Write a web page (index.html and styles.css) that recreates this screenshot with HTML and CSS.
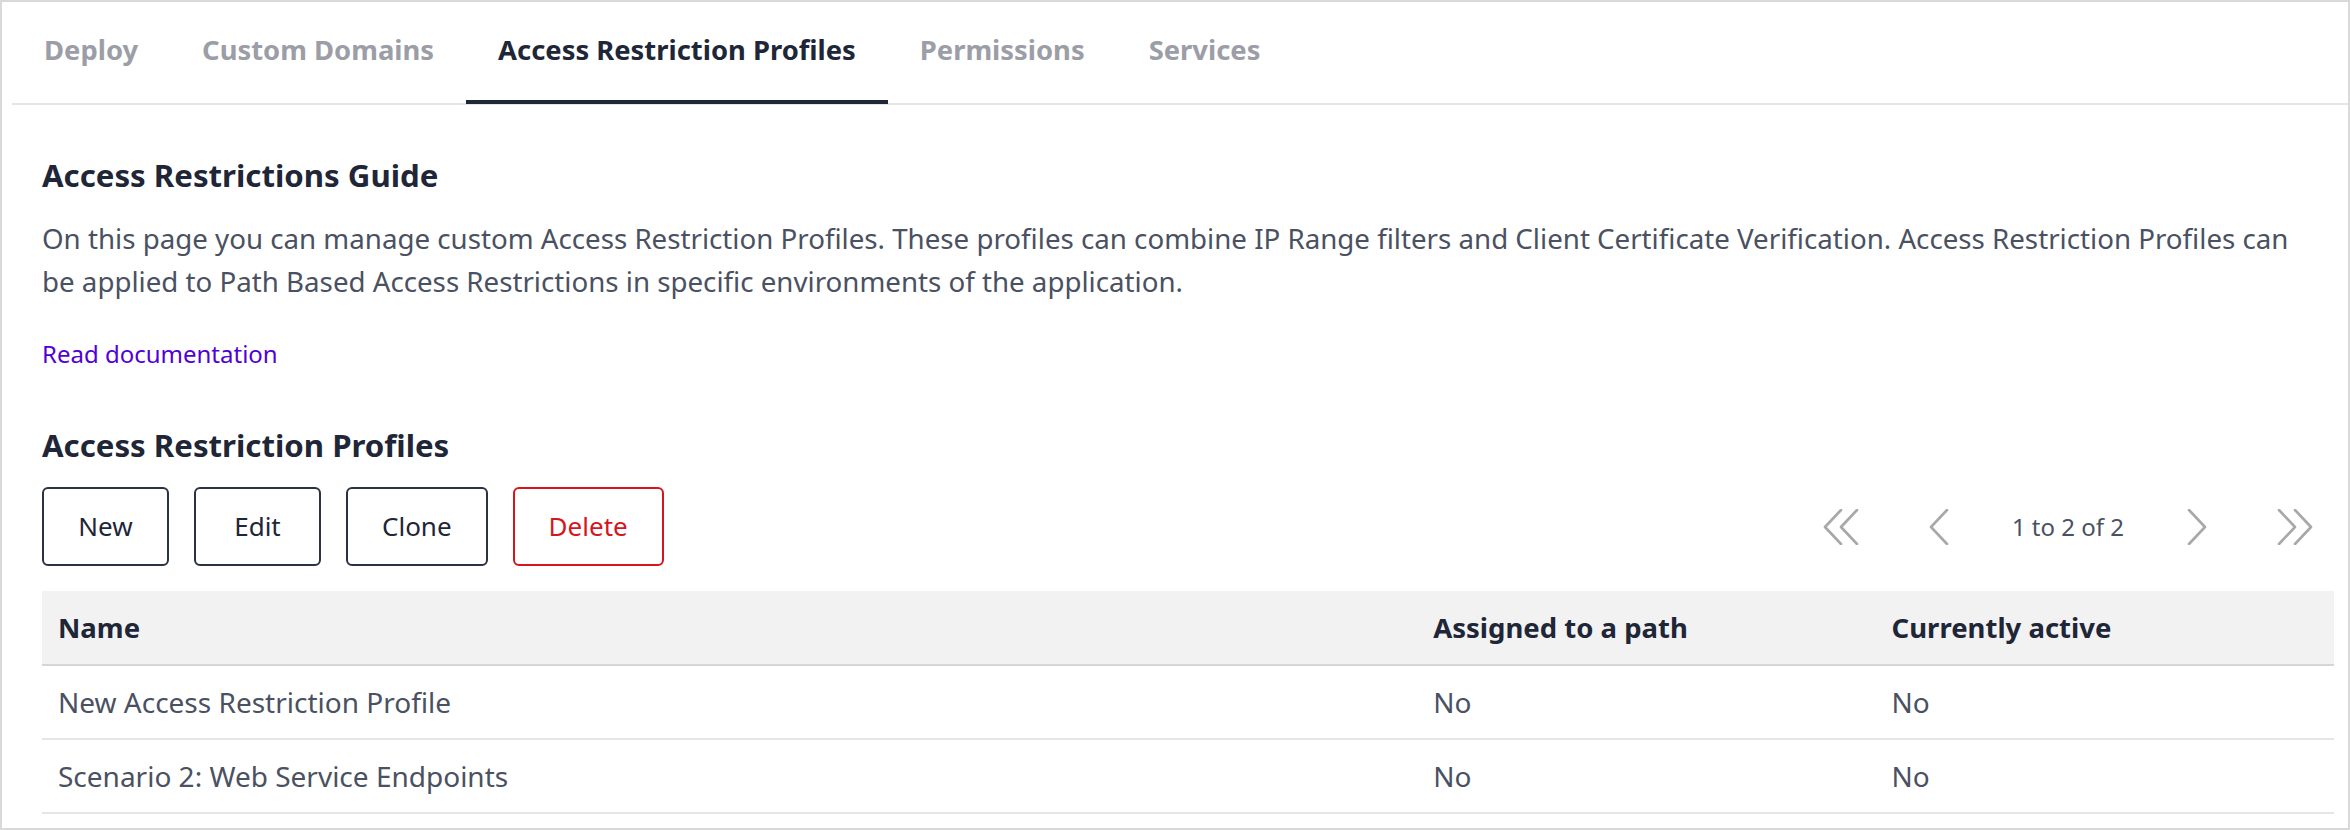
FILE: index.html
```html
<!DOCTYPE html>
<html lang="en">
<head>
<meta charset="utf-8">
<title>Access Restriction Profiles</title>
<link rel="stylesheet" href="styles.css">
</head>
<body>
<div class="page">
  <nav class="tabs">
    <a class="tab">Deploy</a>
    <a class="tab">Custom Domains</a>
    <a class="tab active">Access Restriction Profiles</a>
    <a class="tab">Permissions</a>
    <a class="tab">Services</a>
  </nav>
  <main class="content">
    <h1 class="title">Access Restrictions Guide</h1>
    <p class="guide">On this page you can manage custom Access Restriction Profiles. These profiles can combine IP Range filters and Client Certificate Verification. Access Restriction Profiles can be applied to Path Based Access Restrictions in specific environments of the application.</p>
    <a class="doc-link">Read documentation</a>
    <h2 class="title section">Access Restriction Profiles</h2>
    <div class="toolbar">
      <div class="actions">
        <button class="btn">New</button>
        <button class="btn">Edit</button>
        <button class="btn">Clone</button>
        <button class="btn danger">Delete</button>
      </div>
      <div class="pager">
        <span class="pg-icon dbl">
          <svg width="36" height="36" viewBox="0 0 36 36"><polyline points="18,1 2,18 18,35"/><polyline points="34,1 18,18 34,35"/></svg>
        </span>
        <span class="pg-icon single">
          <svg width="20" height="36" viewBox="0 0 20 36"><polyline points="18,1 2,18 18,35"/></svg>
        </span>
        <span class="pg-text">1 to 2 of 2</span>
        <span class="pg-icon single">
          <svg width="20" height="36" viewBox="0 0 20 36"><polyline points="2,1 18,18 2,35"/></svg>
        </span>
        <span class="pg-icon dbl last">
          <svg width="36" height="36" viewBox="0 0 36 36"><polyline points="2,1 18,18 2,35"/><polyline points="18,1 34,18 18,35"/></svg>
        </span>
      </div>
    </div>
    <table class="grid">
      <colgroup>
        <col class="c-name">
        <col class="c-small">
        <col class="c-small">
      </colgroup>
      <thead>
        <tr><th>Name</th><th>Assigned to a path</th><th>Currently active</th></tr>
      </thead>
      <tbody>
        <tr><td>New Access Restriction Profile</td><td>No</td><td>No</td></tr>
        <tr><td>Scenario 2: Web Service Endpoints</td><td>No</td><td>No</td></tr>
      </tbody>
    </table>
  </main>
</div>
</body>
</html>
```
FILE: styles.css
```css
* { box-sizing: border-box; }
html, body { margin: 0; padding: 0; background: #fff; }
body { font-family: "Noto Sans", "Open Sans", sans-serif; }

.page {
  width: 2350px;
  height: 830px;
  border: 2px solid #d9d9d9;
  display: flex;
  flex-direction: column;
  overflow: hidden;
}

.tabs {
  display: flex;
  margin-left: 10px;
  border-bottom: 2px solid #e5e5e5;
  height: 104px;
}
.tab {
  display: flex;
  align-items: center;
  padding: 0 32px;
  height: 102px;
  padding-bottom: 2px;
  font-size: 27.4px;
  font-weight: 700;
  color: #9b9ea6;
  border-bottom: 4px solid transparent;
  line-height: 38px;
  margin-bottom: -2px;
}
.tab.active {
  color: #1e2637;
  border-bottom-color: #1e2637;
}

.content {
  padding: 0 14px 14px 40px;
  display: flex;
  flex-direction: column;
  flex: 1;
}

.title {
  margin: 50px 0 0;
  font-size: 31.2px;
  line-height: 40px;
  font-weight: 700;
  color: #1e2637;
}
.title.section { margin-top: 56px; }

.guide {
  margin: 22px 30px 0 0;
  font-size: 27.7px;
  line-height: 43px;
  color: #4a5162;
}

.doc-link {
  margin-top: 36px;
  font-size: 24px;
  line-height: 30px;
  color: #5000d8;
  align-self: flex-start;
}

.toolbar {
  margin-top: 22px;
  display: flex;
  justify-content: space-between;
  align-items: center;
}
.actions { display: flex; gap: 25px; }
.btn {
  font-family: inherit;
  font-size: 26px;
  line-height: 35px;
  min-width: 127px;
  height: 79px;
  padding: 0 34px;
  background: #fff;
  color: #1e2637;
  border: 2px solid #2a3142;
  border-radius: 6px;
}
.btn.danger {
  color: #d5161d;
  border-color: #d5161d;
}

.pager {
  display: flex;
  align-items: center;
  margin-right: 21px;
}
.pg-icon { display: flex; }
.pg-icon svg polyline {
  fill: none;
  stroke: #a8a8aa;
  stroke-width: 2.6;
  stroke-linecap: round;
  stroke-linejoin: round;
}
.pg-icon.dbl { margin-right: 70px; }
.pg-icon.dbl.last { margin-right: 0; margin-left: 70px; }
.pg-text {
  padding: 0 63px;
  font-size: 24px;
  color: #4a5162;
  line-height: 36px;
}

.grid {
  margin-top: 25px;
  width: 100%;
  border-collapse: collapse;
  table-layout: fixed;
  font-size: 28px;
}
.c-name { width: 60%; }
.c-small { width: 20%; }
.grid th {
  background: #f2f2f2;
  height: 74px;
  text-align: left;
  padding: 0 16px;
  font-weight: 700;
  font-size: 27.5px;
  color: #1e2637;
  border-bottom: 2px solid #d6d6d6;
}
.grid td {
  height: 74px;
  padding: 0 16px;
  color: #4a5162;
  border-bottom: 2px solid #e6e6e6;
}
```
